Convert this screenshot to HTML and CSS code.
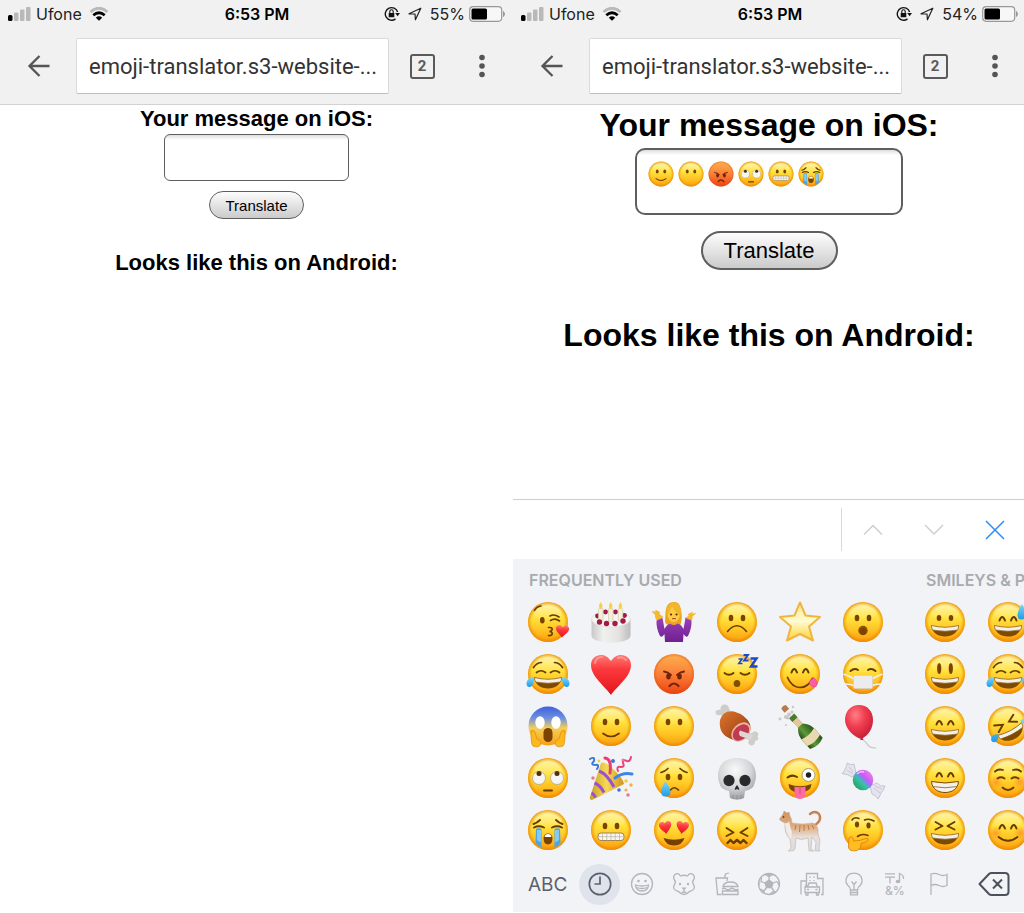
FILE: index.html
```html
<!DOCTYPE html>
<html lang="en">
<head>
<meta charset="utf-8">
<title>Emoji Translator</title>
<meta name="viewport" content="width=device-width, initial-scale=1">
<link rel="stylesheet" href="styles.css">
</head>
<body>
<svg class="sprite" aria-hidden="true" width="0" height="0">
  <defs>
    <linearGradient id="gFace" x1="0" y1="0" x2="0" y2="1"><stop offset="0" stop-color="#ffe766"/><stop offset=".4" stop-color="#ffe23c"/><stop offset=".72" stop-color="#ffc122"/><stop offset="1" stop-color="#fb9a0c"/></linearGradient>
    <radialGradient id="gRim"><stop offset=".8" stop-color="#e98a00" stop-opacity="0"/><stop offset="1" stop-color="#e98300" stop-opacity=".75"/></radialGradient>
    <linearGradient id="gShine" x1="0" y1="0" x2="0" y2="1"><stop offset="0" stop-color="#fffbc8" stop-opacity=".7"/><stop offset="1" stop-color="#fffbc8" stop-opacity="0"/></linearGradient>
    <linearGradient id="gRage" x1="0" y1="0" x2="0" y2="1"><stop offset="0" stop-color="#fdb04e"/><stop offset=".5" stop-color="#fb8038"/><stop offset="1" stop-color="#ec4212"/></linearGradient>
    <radialGradient id="gRageRim"><stop offset=".85" stop-color="#d84a00" stop-opacity="0"/><stop offset="1" stop-color="#d84a00" stop-opacity=".45"/></radialGradient>
    <linearGradient id="gScream" x1="0" y1="0" x2="0" y2="1"><stop offset="0" stop-color="#3b62dc"/><stop offset=".3" stop-color="#6f8fe0"/><stop offset=".55" stop-color="#f2cf5a"/><stop offset="1" stop-color="#f9a016"/></linearGradient>
    <linearGradient id="gTear" x1="0" y1="0" x2="0" y2="1"><stop offset="0" stop-color="#7fd8fb"/><stop offset="1" stop-color="#1d9bea"/></linearGradient>
    <linearGradient id="gRed" x1="0" y1="0" x2="0" y2="1"><stop offset="0" stop-color="#ff7a76"/><stop offset=".35" stop-color="#fb3a3c"/><stop offset="1" stop-color="#e3131c"/></linearGradient>
    <radialGradient id="gBalloon" cx=".38" cy=".3" r=".75"><stop offset="0" stop-color="#ff7f86"/><stop offset=".45" stop-color="#f03e50"/><stop offset="1" stop-color="#c41c34"/></radialGradient>
    <linearGradient id="gStar" x1="0" y1="0" x2="0" y2="1"><stop offset="0" stop-color="#ffe88a"/><stop offset=".5" stop-color="#fffbd2"/><stop offset="1" stop-color="#ffd12e"/></linearGradient>
    <radialGradient id="gSkull" cx=".45" cy=".3" r=".7"><stop offset="0" stop-color="#fafafa"/><stop offset=".6" stop-color="#d4d5d8"/><stop offset="1" stop-color="#9a9ca1"/></radialGradient>
    <linearGradient id="gCake" x1="0" y1="0" x2="1" y2="0"><stop offset="0" stop-color="#c9c8c9"/><stop offset=".3" stop-color="#f0f0ef"/><stop offset=".7" stop-color="#e4e3e2"/><stop offset="1" stop-color="#bdbcbe"/></linearGradient>
    <linearGradient id="gMeat" x1="0" y1="0" x2="1" y2="1"><stop offset="0" stop-color="#d9762e"/><stop offset=".5" stop-color="#b9561d"/><stop offset="1" stop-color="#7a310f"/></linearGradient>
    <linearGradient id="gBottle" x1="0" y1="0" x2="1" y2="0"><stop offset="0" stop-color="#24481a"/><stop offset=".4" stop-color="#5d9a3a"/><stop offset="1" stop-color="#2c521c"/></linearGradient>
    <linearGradient id="gCandy" x1="0" y1="1" x2="1" y2="0"><stop offset=".15" stop-color="#2aa36a"/><stop offset=".42" stop-color="#38c3a2"/><stop offset=".5" stop-color="#6f8ff0"/><stop offset=".6" stop-color="#c95cf0"/><stop offset="1" stop-color="#f48cf2"/></linearGradient>
    <linearGradient id="gGold" x1="0" y1="0" x2="1" y2="0"><stop offset="0" stop-color="#c9a020"/><stop offset=".5" stop-color="#f4da58"/><stop offset="1" stop-color="#d0921f"/></linearGradient>
    <linearGradient id="gCat" x1="0" y1="0" x2="0" y2="1"><stop offset="0" stop-color="#d3915c"/><stop offset=".4" stop-color="#dfae84"/><stop offset=".65" stop-color="#e6dfda"/><stop offset="1" stop-color="#dcdcde"/></linearGradient>
    <linearGradient id="gPurple" x1="0" y1="0" x2="0" y2="1"><stop offset="0" stop-color="#9a3fb8"/><stop offset="1" stop-color="#6f1f90"/></linearGradient>
    <radialGradient id="gBlush"><stop offset="0" stop-color="#ff6a20" stop-opacity=".5"/><stop offset="1" stop-color="#ff6a20" stop-opacity="0"/></radialGradient>

    <g id="face"><circle cx="24" cy="24" r="20" fill="url(#gFace)"/><ellipse cx="24" cy="14" rx="14" ry="9" fill="url(#gShine)"/><circle cx="24" cy="24" r="20" fill="url(#gRim)"/></g>
    <path id="heartShape" d="M24 45C19 37 4 27 4 15C4 4 18 1 24 11C30 1 44 4 44 15C44 27 29 37 24 45Z" fill="url(#gRed)"/>
    <g id="grin"><path d="M10.500 27.500Q24 31 37.500 27.500C37 35 31 38.500 24 38.500S11 35 10.500 27.500Z" fill="#7d4a00"/><path d="M10.500 27.500Q24 31 37.500 27.500C37.500 30 37 31 36.500 32Q24 34.500 11.500 32Q10.500 30 10.500 27.500Z" fill="#f4f1ec" stroke="#8a5c18" stroke-width=".7"/></g>
    <g id="arcEyes" fill="none" stroke="#693b00" stroke-width="2" stroke-linecap="round"><path d="M15.500 22.500Q18.200 15.500 21 22.500M27 22.500Q29.800 15.500 32.500 22.500"/></g>
    <g id="dotEyes" fill="#7a4300"><ellipse cx="18" cy="20" rx="2.300" ry="3.200"/><ellipse cx="30" cy="20" rx="2.300" ry="3.200"/></g>
  </defs>

  <symbol id="kiss" viewBox="0 0 48 48"><use href="#face"/><g fill="none" stroke="#693b00" stroke-width="1.600" stroke-linecap="round"><path d="M10.500 12.500Q12.500 8.500 17 8"/><path d="M26 18Q30 15.500 35 19"/><path d="M26.500 22.500Q31 19.500 35.500 23"/><path d="M24.500 29.500Q29 29 28 32Q27 33.500 25.500 33.500Q29 34 28 36.500Q27 38 24.500 37.500"/></g><ellipse cx="18.300" cy="22.300" rx="2.300" ry="3.200" fill="#7a4300"/><use href="#heartShape" transform="translate(31 25.500) scale(.33 .3) rotate(4)"/></symbol>
  <symbol id="cake" viewBox="0 0 48 48"><path d="M4.500 22V38C6 47 42 47 43.500 38V22Z" fill="url(#gCake)"/><ellipse cx="24" cy="21" rx="19.500" ry="8" fill="#f7f6f4" stroke="#d8d6d4" stroke-width=".6"/><g fill="#a01c46"><circle cx="18.500" cy="14" r="2.400"/><circle cx="28.500" cy="14" r="2.400"/><circle cx="10.500" cy="18" r="2.400"/><circle cx="37.500" cy="17.500" r="2.400"/></g><g fill="#f3efd8" stroke="#cbc5a4" stroke-width=".6"><rect x="11.500" y="10.500" width="4.500" height="12.500" rx="1"/><rect x="21.500" y="10.500" width="4.500" height="13" rx="1"/><rect x="31.200" y="10.500" width="4.500" height="12.500" rx="1"/></g><g fill="#a01c46"><circle cx="12.500" cy="24" r="2.700"/><circle cx="19.500" cy="25.500" r="2.700"/><circle cx="28" cy="25.500" r="2.700"/><circle cx="36" cy="23" r="2.700"/></g><g fill="#f4d24c"><path d="M13.700 4Q17.500 9 13.700 11Q10 9 13.700 4ZM23.700 4Q27.500 9 23.700 11Q20 9 23.700 4ZM33.400 4Q37.200 9 33.400 11Q29.700 9 33.400 4Z"/></g></symbol>
  <symbol id="shrug" viewBox="0 0 48 48"><path d="M24 4C14 4 16 16 15 24Q17 29 21 26L30 28Q33 20 31 12C30 6 28 4 24 4Z" fill="#e8a51c"/><path d="M1.500 13L6 13.500L5 11.500L10 14L9.500 16L13.500 19L8.500 23.500Q4.500 21 5 17ZM46.500 15L42 15.500L43 13.500L38 16L38.500 18L34.500 20L39.500 24Q43 22 42.500 18.500Z" fill="#f6b82c"/><path d="M6.500 22.500L12.500 20L14.500 31Q17 25 24 25T33.500 31L35.500 20L41.500 22.500Q42 30 38 38Q36 40 33.500 36L33 44H15L14.500 36Q12 40 10 38Q6 30 6.500 22.500Z" fill="url(#gPurple)"/><path d="M20.500 21H27V26Q24 28 20.500 26Z" fill="#eda324"/><ellipse cx="23.700" cy="16" rx="6.200" ry="8" fill="#ffcb45"/><path d="M17 18Q21 13 22 8Q24 13 30.500 18Q32 5 24 4.500Q15 6 17 18Z" fill="#f1b62b"/><g fill="#513008"><circle cx="21" cy="16.500" r="1.100"/><circle cx="26.500" cy="16.500" r="1.100"/></g><path d="M22 21Q24 19.800 26 21" stroke="#a54028" fill="none"/></symbol>
  <symbol id="frown" viewBox="0 0 48 48"><use href="#face"/><use href="#dotEyes"/><path d="M14.500 33.500Q24 22 33.500 33.500" fill="none" stroke="#693b00" stroke-width="1.600" stroke-linecap="round"/></symbol>
  <symbol id="star" viewBox="0 0 48 48"><path d="M24 4.500L29.500 17.500L44 19L33 28.500L37 42.500L24 36L11 42.500L15 28.500L4 19L18.500 17.500Z" fill="url(#gStar)" stroke="#f0b540" stroke-width="2" stroke-linejoin="round"/></symbol>
  <symbol id="open" viewBox="0 0 48 48"><use href="#face"/><use href="#dotEyes"/><circle cx="24" cy="32.500" r="4.700" fill="#8c5200"/><circle cx="24" cy="33.500" r="3.400" fill="#7a4500"/></symbol>
  <symbol id="joy" viewBox="0 0 48 48"><use href="#face"/><g fill="none" stroke="#693b00" stroke-width="1.700" stroke-linecap="round"><path d="M9.500 17.500Q13 12.500 17.500 12.500M38.500 17.500Q35 12.500 30.500 12.500"/><path d="M12.500 22.500Q17 19 21.500 22.500M26.500 22.500Q31 19 35.500 22.500"/></g><use href="#grin"/><path d="M10 27Q3 28 2.500 33Q2.500 37.500 6 37Q10 36 10 27ZM38 27Q45 28 45.500 33Q45.500 37.500 42 37Q38 36 38 27Z" fill="url(#gTear)"/></symbol>
  <symbol id="heart" viewBox="0 0 48 48"><use href="#heartShape"/><path d="M8 13Q9 7 15 7M31 8Q35 6 39 10" fill="none" stroke="#ffb3ae" stroke-width="2" stroke-linecap="round" opacity=".6"/></symbol>
  <symbol id="rage" viewBox="0 0 48 48"><circle cx="24" cy="24" r="20" fill="url(#gRage)"/><circle cx="24" cy="24" r="20" fill="url(#gRageRim)"/><g fill="#73230a"><ellipse cx="18.500" cy="26.500" rx="2.300" ry="3"/><ellipse cx="29.500" cy="26.500" rx="2.300" ry="3"/></g><g fill="none" stroke="#73230a" stroke-width="1.800" stroke-linecap="round"><path d="M14 21.500Q18 22 21 25M34 21.500Q30 22 27 25"/><path d="M19.500 36Q24 31 28.500 36" stroke-width="2.200"/></g></symbol>
  <symbol id="sleep" viewBox="0 0 48 48"><use href="#face"/><g fill="none" stroke="#693b00" stroke-width="2" stroke-linecap="round"><path d="M11.500 23Q16 26.500 20.500 23M27.500 23Q32 26.500 36.500 23"/></g><ellipse cx="24" cy="33.500" rx="3.300" ry="3.500" fill="#805000"/><g fill="none" stroke="#1f49c4"><path d="M25.500 9H29L25.800 13.500H29.500" stroke-width="1.600"/><path d="M30.500 5H35L31 10.500H35.500" stroke-width="1.900"/><path d="M37.500 8.500H43.500L38 16.500H44.500" stroke-width="2.400"/></g></symbol>
  <symbol id="yum" viewBox="0 0 48 48"><use href="#face"/><use href="#arcEyes"/><path d="M11.500 27.500Q16 37.500 24 37.500T36.500 28.500" fill="none" stroke="#693b00" stroke-width="1.700" stroke-linecap="round"/><path d="M33.500 31L38 27.500Q43 33 40 36.500Q36 38 33.500 34.500Z" fill="#ff5ca6" stroke="#e23a86" stroke-width=".6"/></symbol>
  <symbol id="mask" viewBox="0 0 48 48"><use href="#face"/><g fill="none" stroke="#693b00" stroke-width="2" stroke-linecap="round"><path d="M11.500 21Q15.500 17.500 19 20M36.500 21Q32.500 17.500 29 20"/></g><g fill="none" stroke="#f1f0ef" stroke-width="1.500"><path d="M4.500 24Q10 26 15 29M43.500 24Q38 26 33 29M6 34Q12 34 16 36M42 34Q36 34 32 36"/></g><rect x="14.500" y="25.500" width="19" height="13" rx="1" fill="#ececef" stroke="#cfcfd4" stroke-width=".6"/></symbol>
  <symbol id="scream" viewBox="0 0 48 48"><circle cx="24" cy="24" r="19.500" fill="url(#gScream)"/><g fill="#fff"><ellipse cx="16" cy="20.500" rx="4.700" ry="6.300"/><ellipse cx="32" cy="20.500" rx="4.700" ry="6.300"/></g><rect x="19.500" y="26" width="9" height="14" rx="4.500" fill="#7c4300"/><path d="M7 29Q9 27 11 30L13 37Q18 39 16.500 43Q14 46 9 44Q7 43 7 29ZM41 29Q39 27 37 30L35 37Q30 39 31.500 43Q34 46 39 44Q41 43 41 29Z" fill="#fbb91f" stroke="#e58e08" stroke-width=".8"/></symbol>
  <symbol id="smile" viewBox="0 0 48 48"><use href="#face"/><use href="#dotEyes"/><path d="M16 31.500Q24 37.500 32 31.500" fill="none" stroke="#693b00" stroke-width="1.700" stroke-linecap="round"/></symbol>
  <symbol id="mute" viewBox="0 0 48 48"><use href="#face"/><use href="#dotEyes"/></symbol>
  <symbol id="meat" viewBox="0 0 48 48"><g fill="#cfcdca"><path d="M14 15L8 13Q2 14 2.500 9.500Q4 7 7.500 8Q7 3 11 2.500Q15 2 16 6L18 12Z"/><path d="M29 33L39 31Q41 28 44 30Q46.500 32 44.500 34.500Q47 38 42 39Q42 43.500 38 43.500Q34 42 36 38L28 35Z"/></g><path d="M7 18Q10 8 21 9.500Q33 13 37 22Q39 30 33 36Q27 41 18 37Q5 32 7 18Z" fill="url(#gMeat)"/><ellipse cx="28" cy="30" rx="11" ry="8" transform="rotate(-45 28 30)" fill="#edb4a4"/><ellipse cx="28" cy="30.500" rx="9.500" ry="6.700" transform="rotate(-45 28 30.500)" fill="#c03a50"/><path d="M27 28.500L40 33L38 38L27 34Q25 31 27 28.500Z" fill="#dbd7d3"/></symbol>
  <symbol id="bottle" viewBox="0 0 48 48"><g transform="translate(31 31) rotate(-42)"><path d="M-3-20H3V-10Q8.500-5 8.500 3V14Q0 18-8.500 14V3Q-8.500-5-3-10Z" fill="url(#gBottle)"/><path d="M-3.200-19H3.200V-10H-3.200Z" fill="#e4c998"/><path d="M-8.500 1Q0 4 8.500 1V10Q0 13-8.500 10Z" fill="#e9d9ae"/><path d="M-3.500-23H3.500V-18H-3.500Z" fill="#4a7a30"/><path d="M-3-35Q0-37 3-35V-30H-3Z" fill="#b77b47"/></g><g fill="#c8c7c5"><circle cx="17" cy="5" r="1.200"/><circle cx="4" cy="17" r="1.400"/><circle cx="10" cy="23" r="1"/><circle cx="10" cy="15" r="2"/><circle cx="13" cy="12.500" r="2"/><circle cx="16" cy="10" r="1.500"/><circle cx="12" cy="16" r="1.500"/></g></symbol>
  <symbol id="balloon" viewBox="0 0 48 48"><path d="M23 37Q27 40 29 43T37 46" fill="none" stroke="#cfcfd2" stroke-width="1.400"/><path d="M20 3C11 3 6 10 6 18C6 26 14 35 22.500 37C30 33 34 26 34 18C34 9 28 3 20 3Z" fill="url(#gBalloon)"/><path d="M21 38L24.500 38L23 35Z" fill="#c4223a"/></symbol>
  <symbol id="roll" viewBox="0 0 48 48"><use href="#face"/><g fill="#f6f5f3" stroke="#b4a88c" stroke-width=".8"><circle cx="15" cy="24" r="6.500"/><circle cx="33" cy="24" r="6.500"/></g><circle cx="15" cy="19.500" r="2.500" fill="#4c3010"/><circle cx="33" cy="19.500" r="2.500" fill="#4c3010"/><path d="M20 36.500H28" stroke="#693b00" stroke-width="1.800" stroke-linecap="round"/></symbol>
  <symbol id="party" viewBox="0 0 48 48"><path d="M14 9Q18 7 26 15Q36 24 37 30Q20 39 5 46Q2 46 3 43Z" fill="url(#gGold)"/><g fill="none" stroke="#9d4fd3" stroke-width="3"><path d="M12 17Q20 20 27 33M7.500 29Q13 31 17 38.500M4.500 39Q7 40 8.500 43.500"/></g><g fill="none" stroke-width="2" stroke-linecap="round"><path d="M23 19Q25 5 18 4" stroke="#e83f70" stroke-width="3"/><path d="M28 24Q36 18 45 20" stroke="#3f86e4" stroke-width="3"/><path d="M3 5Q8 2 7 7Q3 11 8 11Q13 10 10 15" stroke="#3a78dc"/><path d="M31 17Q29 12 34 13Q38 13 36 9Q35 5 40 7Q43 8 44 3" stroke="#e84479"/></g><g fill="#f1cf31"><circle cx="39" cy="27" r="1.800"/><circle cx="12" cy="7" r="1.400"/></g><g fill="#3b72dd"><circle cx="26" cy="7" r="2"/><circle cx="32" cy="36" r="1.800"/></g><g fill="#e87795"><circle cx="6" cy="24" r="1.700"/><circle cx="41" cy="41" r="1.800"/><circle cx="36" cy="6" r="1.500"/></g><g fill="#f3b04c"><circle cx="44" cy="31" r="1.700"/><circle cx="39" cy="36" r="1.600"/></g></symbol>
  <symbol id="cry" viewBox="0 0 48 48"><use href="#face"/><g fill="#7a4300"><ellipse cx="18" cy="23" rx="2.300" ry="3.200"/><ellipse cx="30" cy="23" rx="2.300" ry="3.200"/></g><g fill="none" stroke="#693b00" stroke-width="1.700" stroke-linecap="round"><path d="M11 18.500Q15 17.500 18 14.500M37 18.500Q33 17.500 30 14.500M20.500 36Q24 31.500 28.500 36"/></g><path d="M15.500 27Q20.500 34 20.500 38T16 42.500T11 38Q11 34 15.500 27Z" fill="url(#gTear)"/></symbol>
  <symbol id="skull" viewBox="0 0 48 48"><path d="M24 4C11 4 5 11 5 22Q5 26 7 31Q8 35 16 37L17 44Q24 47 31 44L32 37Q40 35 41 31Q43 26 43 22C43 11 37 4 24 4Z" fill="url(#gSkull)"/><g fill="#2a2a2d"><ellipse cx="16" cy="26.500" rx="5.600" ry="5.800"/><ellipse cx="32" cy="26.500" rx="5.600" ry="5.800"/><path d="M24 31Q27 35 26 36L24 35L22 36Q21 35 24 31Z"/></g><path d="M20 41V44.500M24 41V45.500M28 41V44.500" stroke="#929397"/></symbol>
  <symbol id="tongue" viewBox="0 0 48 48"><use href="#face"/><path d="M11.500 23.500Q16 20 21 23" fill="none" stroke="#693b00" stroke-width="2" stroke-linecap="round"/><circle cx="32.500" cy="21" r="6.500" fill="#fff" stroke="#a99b80"/><circle cx="32.500" cy="21" r="2.700" fill="#222"/><path d="M12.500 30Q24 34.500 35.500 30Q35 38 24 38.500T12.500 30Z" fill="#7b4200"/><path d="M18.500 32.500Q24 34 29.500 32.500V39Q29 45 24 45T18.500 39Z" fill="#fb6da4"/><path d="M24 34V40" stroke="#dd407f"/></symbol>
  <symbol id="candy" viewBox="0 0 48 48"><g fill="#e6e3ef" stroke="#bbb9ca" stroke-width=".8" stroke-linejoin="round"><path d="M17 20L13 23Q9 20 3 19.500Q6 17 6.500 14Q8 12 8 9Q12 12 15 10Q16 14 17 20Z"/><path d="M31 32L33 40Q37 41 39 45Q41 42 42 39Q45 36 46 32Q41 33 38 29Z"/></g><path d="M14 20L8 16M14 18L10 13M35 34L41 39M36 32L43 35" stroke="#c8c5d8"/><circle cx="24" cy="26" r="10.300" fill="url(#gCandy)"/><path d="M18 20Q21 17 25 18" fill="none" stroke="#fff" stroke-width="1.500" opacity=".6"/></symbol>
  <symbol id="sob" viewBox="0 0 48 48"><use href="#face"/><path d="M12 23Q15 21.500 17.500 23V41.500Q14.500 40 11.500 37.500ZM30.500 23Q33 21.500 36 23L36.500 37.500Q34 40 30.500 41.500Z" fill="#4aa5e8"/><path d="M13 24H17V36Q15 36 13 34ZM31 24H35V34Q33 36 31 36Z" fill="#82cbf5"/><g fill="none" stroke="#693b00" stroke-width="1.900" stroke-linecap="round"><path d="M10 21.500Q15 19 20 21.500M28 21.500Q33 19 38 21.500M9.500 18Q13 17 16 14M38.500 18Q35 17 32 14"/></g><path d="M19.500 32Q20 27.500 24 27.500T28.500 32Q28.500 38.500 24 38.500T19.500 32Z" fill="#7c4300"/><path d="M20.500 31Q21 28 24 28T27.500 31Z" fill="#fff"/></symbol>
  <symbol id="grimace" viewBox="0 0 48 48"><use href="#face"/><use href="#dotEyes"/><rect x="11" y="27" width="26" height="7.500" rx="3" fill="#f8f7f4" stroke="#9f834b"/><path d="M11 30.700H37M15.500 27V34.500M19.800 27V34.500M24 27V34.500M28.200 27V34.500M32.500 27V34.500" stroke="#b7aea0" stroke-width=".7"/></symbol>
  <symbol id="love" viewBox="0 0 48 48"><use href="#face"/><use href="#heartShape" transform="translate(8 14) scale(.31) rotate(-8 24 24)"/><use href="#heartShape" transform="translate(25 14) scale(.31) rotate(8 24 24)"/><path d="M13.500 32Q24 35.500 34.500 32Q32 39.500 24 39.500T13.500 32Z" fill="#744000"/></symbol>
  <symbol id="confound" viewBox="0 0 48 48"><use href="#face"/><g fill="none" stroke="#693b00" stroke-width="1.900" stroke-linecap="round" stroke-linejoin="round"><path d="M13.500 22L20.500 26.500L13.500 30M34.500 22L27.500 26.500L34.500 30"/><path d="M14.500 37L17.500 34L20.500 37L24 34L27.500 37L30.500 34L33.500 37" stroke-width="2.400"/></g></symbol>
  <symbol id="cat" viewBox="0 0 48 48"><path d="M37 20Q47 15 43 8Q39 4 34 8" fill="none" stroke="#c78253" stroke-width="2.400" stroke-linecap="round"/><path d="M5 11L7 8L8 5L11 7L13 6L14 10Q16 13 16 17Q26 19 37 17Q43 20 42 27Q43 32 44 34L43 43L44 45H39L40 36L36 31L35 43L38 45H33L32 32Q25 35 20 32L19 43L17 45H12L15 42L14 33Q8 27 9 17L5 15Q2 13 5 11Z" fill="url(#gCat)" stroke="#b9a89b" stroke-width=".5"/><path d="M20 19L19 24M24 19L23.500 26M28 19L28 25M32 19L33 24M36 19L38 23" stroke="#c5793f"/><path d="M9 17Q12 18 13 15Q14 21 16 26L15 33Q9 27 9 17Z" fill="#f0ecea"/><circle cx="7.500" cy="11" r=".9" fill="#385539"/></symbol>
  <symbol id="think" viewBox="0 0 48 48"><use href="#face"/><g fill="#7a4300"><ellipse cx="18" cy="18.500" rx="2.100" ry="3"/><ellipse cx="29.500" cy="19.500" rx="2.100" ry="3"/></g><g fill="none" stroke="#693b00" stroke-width="1.600" stroke-linecap="round"><path d="M13 14Q15 10.500 20 12.500M25.500 14Q30 12 35 15M18.500 30.500Q23 27 29 29.500"/></g><path d="M10 32Q12 29 14 32L14.500 35Q21 35 27 32.500Q30 32 29 34.500Q26 37 22 37.500Q23 42 18 44.500Q10 46 9.500 41Z" fill="#ffbd22" stroke="#dc8606" stroke-width=".9"/></symbol>
  <symbol id="grinning" viewBox="0 0 48 48"><use href="#face"/><g fill="#7a4300"><ellipse cx="18" cy="20" rx="2.300" ry="3"/><ellipse cx="30" cy="20" rx="2.300" ry="3"/></g><use href="#grin"/></symbol>
  <symbol id="smiley" viewBox="0 0 48 48"><use href="#face"/><g fill="#7a4300"><ellipse cx="18.200" cy="18.500" rx="2.100" ry="5.500"/><ellipse cx="29.800" cy="18.500" rx="2.100" ry="5.500"/></g><use href="#grin"/></symbol>
  <symbol id="happy" viewBox="0 0 48 48"><use href="#face"/><use href="#arcEyes"/><use href="#grin"/></symbol>
  <symbol id="beam" viewBox="0 0 48 48"><use href="#face"/><use href="#arcEyes"/><path d="M10.500 27.500Q24 30.500 37.500 27.500C37 35 31 38.500 24 38.500S11 35 10.500 27.500Z" fill="#f5f2ee" stroke="#7d4a00"/><path d="M11.500 32.500Q24 35 36.500 32.500" fill="none" stroke="#9b7c4b"/></symbol>
  <symbol id="laugh" viewBox="0 0 48 48"><use href="#face"/><path d="M14.500 16L21.500 20L14.500 23.500M33.500 16L26.500 20L33.500 23.500" fill="none" stroke="#693b00" stroke-width="1.900" stroke-linecap="round" stroke-linejoin="round"/><use href="#grin"/></symbol>
  <symbol id="sweat" viewBox="0 0 48 48"><use href="#face"/><use href="#arcEyes"/><use href="#grin"/><path d="M38 6Q42.500 13 42.500 17T38 21.500T33.500 17Q33.500 13 38 6Z" fill="url(#gTear)"/></symbol>
  <symbol id="rofl" viewBox="0 0 48 48"><use href="#face"/><g transform="rotate(-28 24 24)"><path d="M12 17L20 20.500L13 25M34 16.500L27 20.500L34 24.500" fill="none" stroke="#693b00" stroke-width="1.900" stroke-linecap="round"/><use href="#grin"/></g><path d="M14 32Q7 32 7 38Q9 42 13 39Q15 36 14 32ZM36 19Q41 14 45 18Q45 23 40 22Z" fill="url(#gTear)"/></symbol>
  <symbol id="relaxed" viewBox="0 0 48 48"><use href="#face"/><circle cx="12" cy="28" r="7" fill="url(#gBlush)"/><circle cx="36" cy="28" r="7" fill="url(#gBlush)"/><g fill="none" stroke="#693b00" stroke-width="1.800" stroke-linecap="round"><path d="M13.500 24.500Q17 22 20.500 24.500M27.500 24.500Q31 22 34.500 24.500M11 17.500Q14 14.500 19 16M37 17.500Q34 14.500 29 16M18.500 33.500Q24 38.500 29.500 33.500"/></g></symbol>
  <symbol id="blush" viewBox="0 0 48 48"><use href="#face"/><circle cx="11.500" cy="27" r="7" fill="url(#gBlush)"/><circle cx="36.500" cy="27" r="7" fill="url(#gBlush)"/><use href="#arcEyes"/><path d="M14.500 31Q24 38.500 33.500 31" fill="none" stroke="#693b00" stroke-width="1.800" stroke-linecap="round"/></symbol>

  <symbol id="signal" viewBox="0 0 24 16"><rect y="9" width="4.500" height="6" rx="1.500" fill="#000"/><g fill="#b9b9b9"><rect x="6" y="6.500" width="4.500" height="8.500" rx="1"/><rect x="12" y="3.500" width="4.500" height="11.500" rx="1"/><rect x="18" y="1" width="4.500" height="14" rx="1"/></g></symbol>
  <symbol id="wifi" viewBox="0 0 20 14"><path d="M1.500 5Q10-2.500 18.500 5" fill="none" stroke="#b9b9b9" stroke-width="2.800"/><path d="M4.300 8.200Q10 3.400 15.700 8.200" fill="none" stroke="#000" stroke-width="2.800"/><path d="M6.800 10.700Q10 8 13.200 10.700L10 13.800Z" fill="#000"/></symbol>
  <symbol id="rotlock" viewBox="0 0 16 16"><path d="M13.600 6A6.300 6.300 0 1 0 11.500 12.900" fill="none" stroke="#111" stroke-width="1.400"/><path d="M11.200 7H16L13.600 10.200Z" fill="#111"/><rect x="4.700" y="7" width="5.600" height="4.200" rx=".5" fill="#111"/><path d="M5.800 7V5.500A1.700 1.700 0 0 1 9.200 5.500V7" fill="none" stroke="#111" stroke-width="1.100"/></symbol>
  <symbol id="locate" viewBox="0 0 14 14"><path d="M1 6.800L12.800 1.200L7.400 12.800L7 7Z" fill="none" stroke="#222" stroke-width="1.200" stroke-linejoin="round"/></symbol>
  <symbol id="battery" viewBox="0 0 37 16"><rect x=".7" y=".7" width="32" height="14.600" rx="3.500" fill="#f7f7f7" stroke="#999" stroke-width="1.200"/><rect x="2.500" y="2.500" width="15.500" height="11" rx="1.500"/><path d="M34.500 5.500Q36.500 8 34.500 10.500Z" fill="#999" stroke="#999"/></symbol>
  <symbol id="back" viewBox="0 0 24 24"><path d="M22.500 12H2.500M12.500 2L2.500 12L12.500 22" fill="none" stroke="#555" stroke-width="2.300"/></symbol>
  <symbol id="dots" viewBox="0 0 8 24"><g fill="#555"><circle cx="4" cy="3.500" r="2.800"/><circle cx="4" cy="12" r="2.800"/><circle cx="4" cy="20.500" r="2.800"/></g></symbol>
</svg>

<main class="screens">
  <section class="screen">
    <header class="browser">
      <div class="status">
        <div class="status-left"><svg width="24" height="16"><use href="#signal"/></svg><span>Ufone</span><svg class="wifi" width="20" height="14"><use href="#wifi"/></svg></div>
        <time class="clock">6:53 PM</time>
        <div class="status-right"><svg width="16" height="16"><use href="#rotlock"/></svg><svg class="locate" width="14" height="14"><use href="#locate"/></svg><span>55%</span><svg width="37" height="16"><use href="#battery"/></svg></div>
      </div>
      <nav class="toolbar">
        <button class="tool back" aria-label="Back"><svg width="24" height="24"><use href="#back"/></svg></button>
        <input class="address" type="text" aria-label="Address" value="emoji-translator.s3-website-...">
        <button class="tool" aria-label="Open tabs"><span class="tabs">2</span></button>
        <button class="tool menu" aria-label="Menu"><svg width="8" height="24"><use href="#dots"/></svg></button>
      </nav>
    </header>
    <form class="page">
      <label class="title" for="message-a">Your message on iOS:</label>
      <div class="field"><textarea class="message" id="message-a"></textarea></div>
      <button class="translate" type="button">Translate</button>
      <h2 class="title result">Looks like this on Android:</h2>
    </form>
  </section>

  <section class="screen">
    <header class="browser">
      <div class="status">
        <div class="status-left"><svg width="24" height="16"><use href="#signal"/></svg><span>Ufone</span><svg class="wifi" width="20" height="14"><use href="#wifi"/></svg></div>
        <time class="clock">6:53 PM</time>
        <div class="status-right"><svg width="16" height="16"><use href="#rotlock"/></svg><svg class="locate" width="14" height="14"><use href="#locate"/></svg><span>54%</span><svg width="37" height="16"><use href="#battery"/></svg></div>
      </div>
      <nav class="toolbar">
        <button class="tool back" aria-label="Back"><svg width="24" height="24"><use href="#back"/></svg></button>
        <input class="address" type="text" aria-label="Address" value="emoji-translator.s3-website-...">
        <button class="tool" aria-label="Open tabs"><span class="tabs">2</span></button>
        <button class="tool menu" aria-label="Menu"><svg width="8" height="24"><use href="#dots"/></svg></button>
      </nav>
    </header>
    <form class="page zoomed">
      <label class="title" for="message-b">Your message on iOS:</label>
      <div class="field">
        <textarea class="message" id="message-b"></textarea>
        <div class="typed" aria-hidden="true"><svg><use href="#smile"/></svg><svg><use href="#mute"/></svg><svg><use href="#rage"/></svg><svg><use href="#roll"/></svg><svg><use href="#grimace"/></svg><svg><use href="#sob"/></svg></div>
      </div>
      <button class="translate" type="button">Translate</button>
      <h2 class="title result">Looks like this on Android:</h2>
    </form>

    <div class="assist">
      <div class="assist-actions">
        <button aria-label="Previous field"><svg width="22" height="22" viewBox="0 0 22 22"><path d="M2 15.500L11 6.500L20 15.500" stroke="#cfcfd1"/></svg></button>
        <button aria-label="Next field"><svg width="22" height="22" viewBox="0 0 22 22"><path d="M2 6L11 15L20 6" stroke="#cfcfd1"/></svg></button>
        <button aria-label="Close"><svg width="22" height="22" viewBox="0 0 22 22"><path d="M2 2L20 20M20 2L2 20" stroke="#2a8cf7"/></svg></button>
      </div>
    </div>
    <div class="keyboard">
      <div class="groups">
        <section class="group">
          <h3>FREQUENTLY USED</h3>
          <div class="keys">
            <button aria-label="Kiss"><svg><use href="#kiss"/></svg></button><button aria-label="Cake"><svg><use href="#cake"/></svg></button><button aria-label="Shrug"><svg><use href="#shrug"/></svg></button><button aria-label="Frown"><svg><use href="#frown"/></svg></button><button aria-label="Star"><svg><use href="#star"/></svg></button><button aria-label="Open mouth"><svg><use href="#open"/></svg></button>
            <button aria-label="Tears of joy"><svg><use href="#joy"/></svg></button><button aria-label="Heart"><svg><use href="#heart"/></svg></button><button aria-label="Angry"><svg><use href="#rage"/></svg></button><button aria-label="Sleeping"><svg><use href="#sleep"/></svg></button><button aria-label="Yum"><svg><use href="#yum"/></svg></button><button aria-label="Mask"><svg><use href="#mask"/></svg></button>
            <button aria-label="Scream"><svg><use href="#scream"/></svg></button><button aria-label="Slight smile"><svg><use href="#smile"/></svg></button><button aria-label="No mouth"><svg><use href="#mute"/></svg></button><button aria-label="Meat"><svg><use href="#meat"/></svg></button><button aria-label="Champagne"><svg><use href="#bottle"/></svg></button><button aria-label="Balloon"><svg><use href="#balloon"/></svg></button>
            <button aria-label="Eye roll"><svg><use href="#roll"/></svg></button><button aria-label="Party popper"><svg><use href="#party"/></svg></button><button aria-label="Crying"><svg><use href="#cry"/></svg></button><button aria-label="Skull"><svg><use href="#skull"/></svg></button><button aria-label="Winking tongue"><svg><use href="#tongue"/></svg></button><button aria-label="Candy"><svg><use href="#candy"/></svg></button>
            <button aria-label="Sobbing"><svg><use href="#sob"/></svg></button><button aria-label="Grimace"><svg><use href="#grimace"/></svg></button><button aria-label="Heart eyes"><svg><use href="#love"/></svg></button><button aria-label="Confounded"><svg><use href="#confound"/></svg></button><button aria-label="Cat"><svg><use href="#cat"/></svg></button><button aria-label="Thinking"><svg><use href="#think"/></svg></button>
          </div>
        </section>
        <section class="group pair">
          <h3>SMILEYS &amp; PEOPLE</h3>
          <div class="keys">
            <button aria-label="Grinning"><svg><use href="#grinning"/></svg></button><button aria-label="Sweat smile"><svg><use href="#sweat"/></svg></button>
            <button aria-label="Smiley"><svg><use href="#smiley"/></svg></button><button aria-label="Joy"><svg><use href="#joy"/></svg></button>
            <button aria-label="Happy"><svg><use href="#happy"/></svg></button><button aria-label="Rolling laughing"><svg><use href="#rofl"/></svg></button>
            <button aria-label="Beaming"><svg><use href="#beam"/></svg></button><button aria-label="Relaxed"><svg><use href="#relaxed"/></svg></button>
            <button aria-label="Laughing"><svg><use href="#laugh"/></svg></button><button aria-label="Blush"><svg><use href="#blush"/></svg></button>
          </div>
        </section>
      </div>
      <div class="tabbar">
        <button class="abc">ABC</button>
        <div class="categories">
          <button class="active" aria-label="Recent"><svg viewBox="0 0 24 24"><circle cx="12" cy="12" r="10.700"/><path d="M12 4.500V12H6.500"/></svg></button>
          <button aria-label="Smileys"><svg viewBox="0 0 24 24"><circle cx="12" cy="12" r="10.500"/><path d="M5.500 13Q12 15 18.500 13Q18 19 12 19T5.500 13Z"/><path d="M6.500 15.500Q12 17.500 17.500 15.500"/><g class="solid"><circle cx="8.500" cy="9" r="1.300"/><circle cx="15.500" cy="9" r="1.300"/></g></svg></button>
          <button aria-label="Animals"><svg viewBox="0 0 24 24"><path d="M3.500 9.500Q0 5 3 2.500Q6 0 8.500 4Q12 2.500 15.500 4Q18 0 21 2.500Q24 5 20.500 9.500Q21 12 22.500 15Q22 18.500 17.500 19.500Q15 22.500 12 22.500T6.500 19.500Q2 18.500 1.500 15Q3 12 3.500 9.500Z"/><path d="M12 18V20.500M9.500 20.500Q12 19.500 14.500 20.500"/><g class="solid"><circle cx="8" cy="12" r="1.200"/><circle cx="16" cy="12" r="1.200"/><path d="M9.500 15.500H14.500L12 18.500Z"/></g></svg></button>
          <button aria-label="Food"><svg viewBox="0 0 24 24"><path d="M6.500 22.500H2.500L1 6H12.500L12 9M9.500 6L10.500 2L14 1M8 14.500Q9 10 15.500 10T23 14.500ZM7 17Q9 15.500 11 17T15 17T19 17T23.500 17M7.500 19H23V22.500H7.500Z"/></svg></button>
          <button aria-label="Activity"><svg viewBox="0 0 24 24"><circle cx="12" cy="12" r="10.500"/><path d="M12 8L16 11L14.500 15.500H9.500L8 11ZM12 8V4.500M16 11L20 9.500M14.500 15.500L17 19M9.500 15.500L7 19M8 11L4 9.500M8.500 3L12 4.500L15.500 3M20 9.500L22 13M17 19L13 22M7 19L3.500 17M4 9.500L4.500 5.500"/><path class="solid" d="M12 8L16 11L14.500 15.500H9.500L8 11ZM8.500 2L12 4.500L15.500 2ZM20 9L22.500 12L22 14ZM17 19L19.500 19L15 22ZM7 19L4.500 19L9 22ZM4 9L1.500 12L2 14Z"/></svg></button>
          <button aria-label="Travel"><svg viewBox="0 0 24 24"><path d="M1 22.500V9H6.500M6.500 15V1.500H17.500V6.500H23V22.500H21M6.500 11L5.500 15M7.500 15L9 11H16L17.500 15M5 15H19.500V20.500H5ZM6 20.500V23H8V20.500M16.500 20.500V23H18.500V20.500M10 4.500V6M14 4.500V6M10 8V9M14 8V9M7 17.500H9M15.500 17.500H17.500"/></svg></button>
          <button aria-label="Objects"><svg viewBox="0 0 24 24"><path d="M8.500 18Q8.500 15.500 5.500 13Q3.500 10.500 4 8Q5 1.200 12 1.200T20 8Q20.500 10.500 18.500 13Q15.500 15.500 15.500 18ZM8.500 18V22.800H15.500V18M8.500 20.500H15.500M9.500 9.500L12 12.500L14.500 9.500M12 12.500V18"/></svg></button>
          <button aria-label="Symbols"><svg viewBox="0 0 24 24"><path d="M1 1.800H11M1 5.200H11M6 5.200V11.500M15.500 9V1.500Q20 3 19.500 7"/><ellipse class="solid" cx="14" cy="9.500" rx="2.300" ry="1.700"/><text class="marks" x="1" y="23">&amp;%</text></svg></button>
          <button aria-label="Flags"><svg viewBox="0 0 24 24"><path d="M4 23V2Q8 .5 12 2.500T20 2.500V13.500Q16 15.500 12 13.500T4 13.500"/></svg></button>
        </div>
        <button class="delete" aria-label="Delete"><svg width="32" height="26" viewBox="0 0 32 26"><path d="M1.500 13L11 3Q12 2 13.500 2H27Q30.500 2 30.500 5.500V20.500Q30.500 24 27 24H13.500Q12 24 11 23ZM15 8.500L24 17.500M24 8.500L15 17.500"/></svg></button>
      </div>
    </div>
  </section>
</main>
</body>
</html>
```
FILE: styles.css
```css
* { box-sizing: border-box; }
body { margin: 0; background: #fff; color: #000; font-family: Inter, sans-serif; overflow-x: hidden; }
button { margin: 0; padding: 0; border: 0; background: none; color: inherit; font: inherit; display: flex; align-items: center; justify-content: center; }
svg { display: block; flex: none; }
.sprite { position: absolute; }

/* The second screen runs slightly past the right edge. */
.screens { display: grid; grid-template-columns: 1fr 1fr; width: calc(100% + 2px); min-height: 100vh; }
.screen { display: flex; flex-direction: column; min-width: 0; overflow: hidden; }

.browser { background: #f1f1f1; border-bottom: 1px solid #d2d2d2; }
.status { display: grid; grid-template-columns: 1fr auto 1fr; align-items: center; height: 28px; padding: 0 7px 0 8px; font-size: 16px; color: #222; }
.status-left, .status-right { display: flex; align-items: center; gap: 4px; }
.status-right { justify-content: flex-end; }
.wifi { margin-left: 3px; }
.locate { margin: 0 4px; }
.clock { font-weight: 600; color: #000; }

.toolbar { display: grid; grid-template-columns: 76px 1fr 66px 58px; padding: 10px 0; }
.back { padding-left: 2px; }
.menu { padding-right: 4px; }
.address { width: 100%; min-width: 0; height: 56px; padding: 0 12px; border: 1px solid #dadada; border-bottom-color: #bdbdbd; border-radius: 2px; background: #fff; color: #333; font: 22px Roboto, sans-serif; }
.tabs { display: flex; align-items: center; justify-content: center; width: 25px; height: 25px; border: 2px solid #5a5a5a; border-radius: 3px; color: #5a5a5a; font: 700 15px Roboto, sans-serif; }

.page { flex: 1; display: flex; flex-direction: column; align-items: center; font-family: "Liberation Sans", sans-serif; }
.title { margin: 0; font-size: 22px; font-weight: 700; line-height: 28px; white-space: nowrap; }
.field { display: grid; width: 185px; height: 47px; margin-top: 1px; }
.field > * { grid-area: 1 / 1; }
.message { width: 100%; height: 100%; resize: none; border: 1px solid #5f5f5f; border-radius: 6px; background: linear-gradient(#dedede, #fff 5px); }
.translate { width: 95px; height: 28px; margin-top: 10px; border: 1px solid #5f5f5f; border-radius: 20px; background: linear-gradient(#fdfdfd, #cbcbcb); font-size: 15px; }
.result { margin-top: 30px; }

.zoomed { padding-right: 1px; }
.zoomed .title { font-size: 32px; line-height: 40px; }
.zoomed .field { width: 268px; height: 67px; margin-top: 3px; }
.zoomed .message { border-width: 2px; border-radius: 10px; }
.zoomed .translate { width: 137px; height: 39px; margin-top: 16px; border-width: 2px; font-size: 22px; }
.zoomed .result { margin-top: 45px; }
.typed { display: flex; padding: 11px; pointer-events: none; }
.typed svg { width: 30px; height: 30px; }

.assist { display: flex; justify-content: flex-end; height: 60px; padding: 8px 1px 8px 0; border-top: 1px solid #cfcfcf; }
.assist-actions { display: flex; border-left: 1px solid #d9d9d9; }
.assist-actions button { width: 61px; }
.assist-actions svg { fill: none; stroke-width: 1.5; }

.keyboard { margin-bottom: 1px; background: #f2f3f7; overflow: hidden; }
.groups { display: flex; gap: 19px; padding: 0 3px; }
.group { flex: none; width: 378px; }
.group h3 { margin: 0; padding: 11px 0 6px 13px; color: #a9aaae; font-size: 16px; font-weight: 600; line-height: 20px; white-space: nowrap; }
.keys { display: grid; grid-template-columns: repeat(6, 63px); grid-auto-rows: 52px; }
.pair .keys { grid-template-columns: repeat(2, 63px); }
.keys svg { width: 48px; height: 48px; }

.tabbar { display: flex; align-items: center; height: 56px; padding: 0 16px 0 15px; color: #5b616c; }
.abc { font-size: 19px; }
.categories { flex: 1; display: grid; grid-template-columns: repeat(9, 1fr); padding: 0 18px 0 11px; }
.categories button { justify-self: center; width: 41px; height: 41px; border-radius: 50%; color: #b2b5bb; }
.categories .active { background: #dfe4ec; color: #5b616c; }
.categories svg { width: 24px; height: 24px; overflow: visible; fill: none; stroke: currentColor; stroke-width: 1.3; }
.categories .active svg { stroke-width: 1.7; }
.categories .solid { fill: currentColor; stroke: none; }
.categories .marks { fill: currentColor; stroke: none; font: 500 12px Inter, sans-serif; }
.delete svg { fill: none; stroke: #4b525c; stroke-width: 2; stroke-linejoin: round; }
```
